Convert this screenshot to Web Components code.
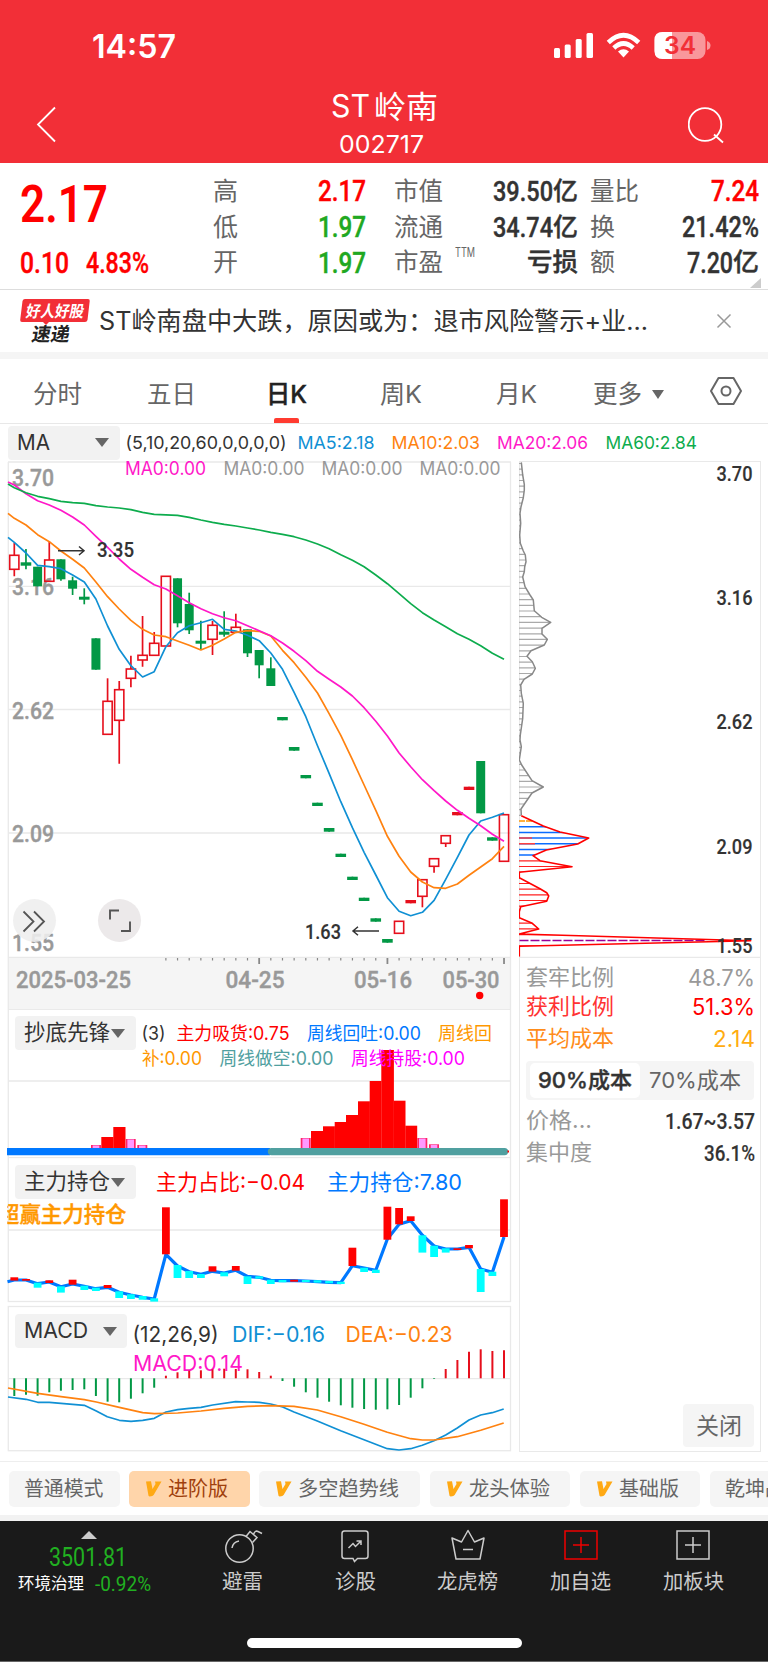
<!DOCTYPE html>
<html lang="zh-CN">
<head>
<meta charset="utf-8">
<title>ST岭南 002717</title>
<style>
    body {
        margin: 0;
        width: 768px;
        background: #fff;
        font-family: Inter, "Noto Sans CJK SC", sans-serif;
        overflow-x: hidden;
    }
</style>
</head>
<body>
<stock-page></stock-page>

<script>
const SANS = 'Inter, &quot;Noto Sans CJK SC&quot;, sans-serif';
const DIN = 'Roboto, &quot;Noto Sans CJK SC&quot;, sans-serif';

// Candle slot centre on the shared time axis
const slot = i => 14.3 + i * 11.66;
const fix = n => Number(n.toFixed(1));

// Svg label with a fixed width; a thin stroke thickens the medium weight
function label(x, y, w, size, text, color, opt = {}) {
    const weight = opt.weight || 400;
    const stroke = Number(weight) === 500 ? `stroke="${color}" stroke-width="${size < 24 && opt.din ? 0.15 : 0.4}"` : '';
    return `<text x="${x}" y="${y}" textLength="${w}" lengthAdjust="spacingAndGlyphs"
        font-family="${opt.din ? DIN : SANS}" font-size="${size}" font-weight="${weight}"
        fill="${color}" ${stroke}>${text}</text>`;
}

function line(points, color, width = 1.7) {
    const d = points.map(p => `${fix(p[0])},${fix(p[1])}`).join(' ');
    return `<polyline points="${d}" fill="none" stroke="${color}" stroke-width="${width}" stroke-linejoin="round"/>`;
}

function hline(x1, x2, y, color = '#e9e9e9', width = 1.3) {
    return `<path d="M${x1} ${y}H${x2}" stroke="${color}" stroke-width="${width}"/>`;
}

class BaseElement extends HTMLElement {
    constructor() {
        super();
        this.attachShadow({ mode: 'open' });
    }

    connectedCallback() {
        this.shadowRoot.innerHTML = this.render();
    }
}

// One line of text set to a given width, centred on its cap height
class FitText extends BaseElement {
    render() {
        const w = Number(this.getAttribute('w'));
        const size = Number(this.getAttribute('size') || 25);
        const weight = this.getAttribute('weight') || 400;
        const din = this.hasAttribute('din');
        return `
            <style>
                :host { display: block; flex: none; }
                svg { display: block; overflow: visible; }
            </style>
            <svg width="${w}" height="${fix(size * 1.2)}">
                ${label(0, fix(size * 0.96), w, size, this.textContent, 'currentColor', { din, weight })}
            </svg>`;
    }
}
customElements.define('fit-text', FitText);

class AppHeader extends BaseElement {
    render() {
        return `
            <style>
                :host { display: block; height: 163px; background: #f22f37; color: #fff; }
                .status { display: flex; height: 86px; box-sizing: border-box; padding: 6px 57px 0 92px; align-items: center; justify-content: space-between; }
                .bar { display: grid; grid-template-columns: 80px 1fr 80px; height: 77px; align-items: center; }
                .title { display: flex; flex-direction: column; align-items: center; gap: 5px; margin-top: -3px; }
                .name { display: flex; gap: 4px; margin-left: 0; }
                .code { margin-left: -6px; }
            </style>
            <div class="status">
                <fit-text w="84" size="32" weight="600">14:57</fit-text>
                <svg width="158" height="30" viewBox="552 31 158 30">
                    <g fill="#fff">
                        <rect x="553" y="48" width="6" height="10" rx="1.5"/>
                        <rect x="563.7" y="44.500" width="6" height="13.500" rx="1.500"/>
                        <rect x="574.700" y="39" width="6" height="19" rx="1.500"/>
                        <rect x="585.500" y="33" width="6.500" height="25" rx="1.500"/>
                        <path d="M622.500 57.500L617 51.500Q622.500 47 628 51.500Z"/>
                    </g>
                    <g fill="none" stroke="#fff" stroke-width="4.600">
                        <path d="M607.300 42.500Q622.500 28 637.700 42.500"/>
                        <path d="M612.800 48Q622.500 39 632.200 48"/>
                    </g>
                    <rect x="653.500" y="32" width="51" height="27" rx="8" fill="#fff" opacity=".5"/>
                    <path d="M671 32H661.500Q653.500 32 653.500 40V51Q653.500 59 661.500 59H671Z" fill="#fff"/>
                    <path d="M706 41Q709.500 42 709.500 45.500T706 50Z" fill="#fff" opacity=".5"/>
                    ${label(663, 54, 32, 24, '34', '#f22f37', { weight: 600 })}
                </svg>
            </div>
            <div class="bar">
                <svg width="80" height="40" viewBox="0 0 80 40"><path d="M55 2.500L38 19.500L55 36.500" fill="none" stroke="#fff" stroke-width="1.800"/></svg>
                <div class="title">
                    <div class="name"><fit-text w="39" size="30.500">ST</fit-text><fit-text w="64" size="31">岭南</fit-text></div>
                    <fit-text class="code" w="85" size="24">002717</fit-text>
                </div>
                <svg width="50" height="44" viewBox="688 102.500 50 44" fill="none" stroke="#fff" stroke-width="1.800">
                    <circle cx="705" cy="124" r="16.300"/><path d="M714 134L723 142"/>
                </svg>
            </div>`;
    }
}
customElements.define('app-header', AppHeader);

// A label on the left, a value on the right
class StatItem extends BaseElement {
    render() {
        return `
            <style>
                :host { display: flex; height: 35.700px; align-items: center; justify-content: space-between; color: #666; }
                .value { display: flex; align-items: center; color: ${this.getAttribute('color') || '#333'}; }
            </style>
            <slot></slot>
            <div class="value"><slot name="value"></slot></div>`;
    }
}
customElements.define('stat-item', StatItem);

class QuotePanel extends BaseElement {
    render() {
        return `
            <style>
                :host { display: grid; grid-template-columns: 193px 153px 184px 169px; column-gap: 0; padding: 10px 0 0 20px;
                    height: 127px; box-sizing: border-box; border-bottom: 1px solid #ddd; position: relative; }
                .price { color: #f00; }
                .change { display: flex; gap: 17px; margin-top: 10.500px; }
                .big { margin-top: -1px; }
                .mid { margin-left: 28px; width: 184px; }
                .last { margin-left: 40px; width: 169px; }
                .ttm { display: flex; gap: 12px; align-items: center; }
                .ttm fit-text + fit-text { margin-top: -19px; }
                .corner { position: absolute; right: 7px; bottom: 1px; width: 0; height: 0; border-left: 11px solid transparent; border-bottom: 10px solid #ccc; }
            </style>
            <div class="price">
                <fit-text class="big" din w="88" size="52" weight="600">2.17</fit-text>
                <div class="change">
                    <fit-text din w="49" size="29" weight="500">0.10</fit-text>
                    <fit-text din w="63" size="29" weight="500">4.83%</fit-text>
                </div>
            </div>
            <div>
                <stat-item color="#f00"><fit-text w="25">高</fit-text><fit-text slot="value" din w="48" size="29" weight="500">2.17</fit-text></stat-item>
                <stat-item color="#21a821"><fit-text w="25">低</fit-text><fit-text slot="value" din w="48" size="29" weight="500">1.97</fit-text></stat-item>
                <stat-item color="#21a821"><fit-text w="25">开</fit-text><fit-text slot="value" din w="48" size="29" weight="500">1.97</fit-text></stat-item>
            </div>
            <div class="mid">
                <stat-item><fit-text w="49">市值</fit-text><fit-text slot="value" din w="60" size="28" weight="500">39.50</fit-text><fit-text slot="value" w="25" weight="500">亿</fit-text></stat-item>
                <stat-item><fit-text w="49">流通</fit-text><fit-text slot="value" din w="60" size="28" weight="500">34.74</fit-text><fit-text slot="value" w="25" weight="500">亿</fit-text></stat-item>
                <stat-item><div class="ttm"><fit-text w="49">市盈</fit-text><fit-text w="20" size="12.500">TTM</fit-text></div><fit-text slot="value" w="51" weight="500">亏损</fit-text></stat-item>
            </div>
            <div class="last">
                <stat-item color="#f00"><fit-text w="49">量比</fit-text><fit-text slot="value" din w="48" size="29" weight="500">7.24</fit-text></stat-item>
                <stat-item><fit-text w="25">换</fit-text><fit-text slot="value" din w="77" size="29" weight="500">21.42%</fit-text></stat-item>
                <stat-item><fit-text w="25">额</fit-text><fit-text slot="value" din w="46" size="29" weight="500">7.20</fit-text><fit-text slot="value" w="26" weight="500">亿</fit-text></stat-item>
            </div>
            <div class="corner"></div>`;
    }
}
customElements.define('quote-panel', QuotePanel);

class NewsBar extends BaseElement {
    render() {
        return `
            <style>
                :host { display: flex; align-items: center; height: 62px; padding-left: 20px; border-bottom: 7px solid #f5f5f5; color: #333; }
                .text { margin: 0 69px 0 8.500px; }
                svg { overflow: visible; flex: none; }
            </style>
            <svg width="70" height="46" viewBox="20 298 70 46">
                <path d="M25 299H88Q90 299 89.700 301L87.500 320Q87 322 85 322H49L46 325L43 322H22Q20 322 20.200 320L22.500 301Q23 299 25 299Z" fill="#f22f37"/>
                <g transform="skewX(-10)">
                    ${label(81, 316.8, 58, 16, '好人好股', '#fff', { weight: 700 })}
                    ${label(91, 341, 38, 19, '速递', '#222', { weight: 700 })}
                </g>
            </svg>
            <fit-text class="text" w="549" size="25.3">ST岭南盘中大跌，原因或为：退市风险警示+业...</fit-text>
            <svg width="14" height="14" viewBox="0 0 14 14"><path d="M.5.5L13.5 13.5M13.5.5L.5 13.5" stroke="#999" stroke-width="1.500"/></svg>`;
    }
}
customElements.define('news-bar', NewsBar);

class PeriodTabs extends BaseElement {
    render() {
        return `
            <style>
                :host { display: grid; grid-template-columns: 115px 113px 117px 111px 121px 107px 84px; height: 64px; border-bottom: 1px solid #e8e8e8; color: #666; }
                div { display: flex; flex-direction: column; align-items: center; justify-content: center; position: relative; padding-top: 6px; }
                .on { color: #222; }
                .on::after { content: ""; position: absolute; bottom: 0; width: 25px; height: 5px; border-radius: 2px 2px 0 0; background: #ff3b30; }
                .more { flex-direction: row; gap: 10px; padding-right: 5px; }
                .set { padding: 0; }
            </style>
            <div><fit-text w="49" size="24.5">分时</fit-text></div>
            <div><fit-text w="49" size="24.5">五日</fit-text></div>
            <div class="on"><fit-text w="41" size="24.5" weight="500">日K</fit-text></div>
            <div><fit-text w="42" size="24.5">周K</fit-text></div>
            <div><fit-text w="41" size="24.5">月K</fit-text></div>
            <div class="more"><fit-text w="49" size="24.5">更多</fit-text>
                <svg width="12" height="9"><path d="M0 0H12L6 9Z" fill="#666"/></svg></div>
            <div class="set"><svg width="34" height="30" viewBox="0 0 34 30" fill="none" stroke="#666" stroke-width="2">
                <path d="M9.500 2H24.500L32 15L24.500 28H9.500L2 15Z" stroke-linejoin="round"/><circle cx="17" cy="15" r="4.500"/></svg></div>`;
    }
}
customElements.define('period-tabs', PeriodTabs);

// Grey drop-down that picks an indicator
class PickerButton extends BaseElement {
    render() {
        return `
            <style>
                :host { display: flex; align-items: center; justify-content: space-between; box-sizing: border-box; height: 34px;
                    padding: 0 11px 0 9px; background: #f2f2f2; border-radius: 4px; color: #333; }
            </style>
            <slot></slot>
            <svg width="14" height="9"><path d="M0 0H14L7 9Z" fill="#666"/></svg>`;
    }
}
customElements.define('picker-button', PickerButton);

class MaLegend extends BaseElement {
    render() {
        return `
            <style>
                :host { display: flex; height: 37px; align-items: center; padding-left: 8px; }
                picker-button { width: 112px; margin-right: 6px; }
            </style>
            <picker-button><fit-text w="33" size="22">MA</fit-text></picker-button>
            <svg width="600" height="37" viewBox="126 424 600 37">
                ${label(125.5, 449.3, 161, 17.6, '(5,10,20,60,0,0,0,0)', '#333')}
                ${label(297.5, 449.3, 77, 17.6, 'MA5:2.18', '#1090d4')}
                ${label(391.5, 449.3, 88.5, 17.6, 'MA10:2.03', '#ff8210')}
                ${label(497, 449.3, 91, 17.6, 'MA20:2.06', '#ff18c8')}
                ${label(605.5, 449.3, 91.5, 17.6, 'MA60:2.84', '#0dac4d')}
            </svg>`;
    }
}
customElements.define('ma-legend', MaLegend);

const RED = '#e60f1c';
const GREEN = '#029845';

// Daily candles: kind, body top, body bottom, wick top, wick bottom (d = flat day drawn as a dash)
const CANDLES = [
    ['r', 555.3, 569.3, 542.7, 576.3], ['g', 562.3, 565.7, 549, 569.3], ['g', 566.7, 586.3], ['r', 560, 581.3, 541.7],
    ['g', 559.3, 579.3, 559.3, 580.7], ['g', 580.3, 588.7, 576.7, 595], ['g', 596.7, 599.7, 588.3, 604.3], ['g', 638.3, 669.7],
    ['r', 701.3, 734.3, 678.3], ['r', 689.7, 720.3, 681, 763.7], ['r', 669, 678.3, 655.7, 687.3], ['r', 655.3, 660, 616, 666.7],
    ['r', 643.3, 655.3, 632], ['r', 576.3, 646], ['g', 578.3, 623.3, 578.3, 627.3], ['g', 604, 630.3, 592.7, 634],
    ['g', 640.7, 643.7, 620.7, 649.3], ['r', 625.3, 639.3, 621, 655], ['g', 631.7, 634.7, 611.3, 636.7], ['r', 627.3, 632.3, 613.7],
    ['g', 629.3, 653.3, 629.3, 657], ['g', 650, 665.3, 650, 678.3], ['g', 668.3, 686, 657.3],
    ['g', 717, 720.3], ['g', 747, 750.7], ['g', 775, 778.3], ['g', 802.7, 806], ['g', 828, 831.7], ['g', 853.7, 857],
    ['g', 876.7, 880], ['g', 897.7, 901], ['g', 918.3, 921.7], ['g', 939, 942.7],
    ['r', 921.3, 933.3], ['d', 900, 903.3], ['r', 879.7, 896.3, 879.7, 907.3], ['r', 858.7, 866.3, 858.7, 872.7],
    ['r', 835.7, 843.3, 835.7, 847], ['d', 812, 815.3], ['d', 786.7, 790], ['g', 761, 813.3], ['g', 837.3, 840.7], ['r', 814.7, 861.3]
];

// Moving averages; the first value sits on the left edge of the plot
const MA5 = [537.3, 542.3, 553, 565.3, 566.7, 568.7, 575, 582, 599, 626, 649.3, 665.7, 677, 671.7, 646.7, 632.7, 625.7, 622.7, 619.3, 629.3, 631, 635.3, 640.7, 653, 669.3, 692.3, 716.7, 745.7, 773.3, 801.7, 827.7, 852.3, 875, 897.7, 911.3, 915.7, 912.3, 900.3, 879.3, 857.3, 835, 821, 817.3, 813];
const MA10 = [513.3, 518.3, 525, 534.7, 541.7, 551, 559.3, 568, 582, 596.7, 609, 620.3, 629.3, 635, 636.7, 641, 645.3, 650, 645.3, 639, 632.3, 630.7, 631.3, 636, 650.3, 662.7, 677.3, 693, 713.7, 735.3, 759.7, 785, 810.3, 836.3, 856.3, 872, 882, 887.7, 888.3, 884, 875.3, 867, 858.7, 846.3];
const MA20 = [482, 485, 493.7, 500.7, 505, 510.3, 517, 525, 536.3, 547.3, 559, 569.3, 577.3, 584.7, 589, 595.7, 602.7, 608.7, 613.7, 617.7, 620.7, 625.7, 630.7, 635.7, 643, 651.3, 660.7, 671.3, 679.3, 687, 696, 707.7, 721.3, 736, 753, 766.7, 779.7, 790.7, 801, 810.3, 818.3, 825.7, 834.3, 841.3];
const MA60 = [484, 487.7, 492.7, 496.3, 498.7, 501.3, 502.7, 503.3, 505.7, 507, 508, 509.7, 512.3, 514.3, 514.8, 515.3, 517.3, 520, 522.3, 524.3, 526, 528, 530, 532.3, 534.3, 536.7, 540, 544, 548.7, 554.7, 560.3, 566.7, 575, 583.7, 593.7, 603.7, 612.7, 620, 626.7, 633.7, 639.3, 645.7, 653.3, 659.3];
const onAxis = ys => ys.map((y, i) => [i ? slot(i - 1) : 8, y]);

class KlineChart extends BaseElement {
    candle([kind, top, bottom, high = top, low = bottom], i) {
        const x = slot(i);
        const color = kind === 'g' ? GREEN : RED;
        if (kind === 'r') {
            return `<path d="M${x} ${high}V${top}M${x} ${bottom}V${low}" stroke="${color}" stroke-width="1.7"/>
                <rect x="${x - 4.6}" y="${top}" width="9.2" height="${bottom - top}" fill="none" stroke="${color}" stroke-width="1.6"/>`;
        }
        const half = bottom - top < 4 ? 5.3 : 4.5;
        return `<path d="M${x} ${high}V${low}" stroke="${color}" stroke-width="1.7"/>
            <rect x="${x - half}" y="${top}" width="${half * 2}" height="${bottom - top}" fill="${color}"/>`;
    }

    ticks() {
        let d = '';
        for (let i = 13; i <= 42; i++) {
            const big = i === 21 || i === 32 || i === 42;
            d += `<path d="M${slot(i)} 958V${big ? 964 : 960.5}" stroke="#888" stroke-width="${big ? 1.8 : 1.2}"/>`;
        }
        return d;
    }

    render() {
        const axis = [['3.70', 486], ['3.16', 595], ['2.62', 718.7], ['2.09', 842], ['1.55', 951]];
        const dates = [['2025-03-25', 16, 115], ['04-25', 225.5, 59], ['05-16', 354, 58], ['05-30', 442.5, 57]];
        const zero = [[125, '#ff18c8'], [223.5, '#999'], [321.5, '#999'], [419.5, '#999']];
        return `
            <style>
                :host { display: block; height: 548px; }
                svg { display: block; overflow: visible; }
            </style>
            <svg width="515" height="548" viewBox="0 461 515 548">
                <rect x="8" y="957" width="503" height="52" fill="#f5f5f5"/>
                ${[462, 586.3, 709.5, 833, 957.3].map(y => hline(8, 511, y)).join('')}
                <path d="M8.300 462V1009M510.500 462V1009" stroke="#e9e9e9" stroke-width="1.300"/>
                ${axis.map(a => label(12, a[1], 42, 24, a[0], '#999', { din: true, weight: 500 })).join('')}
                ${zero.map(z => label(z[0], 474.5, 81, 18, 'MA0:0.00', z[1])).join('')}
                ${CANDLES.map(this.candle).join('')}
                ${line(onAxis(MA5), '#1090d4')}
                ${line(onAxis(MA10), '#ff8210')}
                ${line(onAxis(MA20), '#ff18c8')}
                ${line(onAxis(MA60), '#0dac4d')}
                <path d="M58 550.700H84M79 546.500L84 550.700L79 555M379 931H353M358 926.800L353 931L358 935.200" fill="none" stroke="#333" stroke-width="1.500"/>
                ${label(97, 557, 37, 20, '3.35', '#333', { din: true, weight: 500 })}
                ${label(305, 939.3, 36, 20, '1.63', '#333', { din: true, weight: 500 })}
                <circle cx="34.500" cy="920.500" r="21.500" fill="#eee" opacity=".88"/>
                <circle cx="119.500" cy="920.500" r="21.500" fill="#ece9ea"/>
                <path d="M23.500 911.500L33.500 921.500L23.500 931.500M34 911.500L44 921.500L34 931.500" fill="none" stroke="#555" stroke-width="1.800"/>
                <path d="M110 919.500V910.500H119M121 931H130V921.500" fill="none" stroke="#555" stroke-width="1.900"/>
                ${this.ticks()}
                ${dates.map(d => label(d[1], 988, d[2], 24, d[0], '#999', { din: true, weight: 500 })).join('')}
                <circle cx="479.700" cy="995.500" r="3.700" fill="#f00"/>
            </svg>`;
    }
}
customElements.define('kline-chart', KlineChart);

// Frame shared by the three indicators: plot in the back, picker on top of it
class IndicatorChart extends BaseElement {
    frame(top, height, boxTop, boxBottom, plot, picker, pickerTop, pickerWidth, pickerGap) {
        return `
            <style>
                :host { display: grid; height: ${height}px; align-items: start; justify-items: start; }
                svg, picker-button { grid-area: 1 / 1; }
                svg { display: block; }
                picker-button { width: ${pickerWidth}px; margin: ${pickerTop - top}px 0 0 15px; padding-right: ${pickerGap}px; }
            </style>
            <svg width="515" height="${height}" viewBox="0 ${top} 515 ${height}">
                <rect x="8.300" y="${boxTop}" width="502.200" height="${boxBottom - boxTop}" fill="none" stroke="#e9e9e9" stroke-width="1.300"/>
                ${plot}
            </svg>
            <picker-button>${picker}</picker-button>`;
    }
}

class BottomFisher extends IndicatorChart {
    render() {
        const red = [[101.3, 113.3, 1137], [113.3, 125.3, 1127], [311, 323, 1131], [323, 334.7, 1126.3], [334.7, 346, 1122], [346, 358, 1115],
            [358, 369.7, 1101.3], [369.7, 381.3, 1081], [381.3, 393.7, 1050], [393.7, 405.3, 1100.7], [405.3, 417, 1125.7]];
        const pink = [[91, 1145], [125.7, 1139], [137.3, 1145], [149, 1148], [300.7, 1138], [417.3, 1138], [429, 1144.3], [440.7, 1148]];
        const plot = `
            ${hline(8, 511, 1081)}
            ${red.map(b => `<rect x="${b[0]}" y="${b[2]}" width="${b[1] - b[0] + 0.2}" height="${1149 - b[2]}" fill="#f00"/>`).join('')}
            ${pink.map(b => `<rect x="${b[0]}" y="${b[1]}" width="10" height="${1149 - b[1]}" fill="#ff2468"/>
                <rect x="${b[0] + 1.7}" y="${b[1] + 0.5}" width="6.6" height="${fix(1149 - b[1])}" fill="#ff99ff"/>`).join('')}
            <path d="M7 1151.600H270" stroke="#0078ff" stroke-width="7.400"/>
            <path d="M271.500 1151.600H504.500" stroke="#50a0a0" stroke-width="7.400" stroke-linecap="round"/>
            <rect x="507.500" y="1150.500" width="1.500" height="2" fill="#f00"/>
            ${label(141.5, 1040, 24, 18.5, '(3)', '#333')}
            ${label(176.5, 1040, 113, 18.5, '主力吸货:0.75', '#f00')}
            ${label(307, 1040, 114, 18.5, '周线回吐:0.00', '#0078ff')}
            ${label(438, 1040, 54, 18.5, '周线回', '#ff9800')}
            ${label(142, 1065, 60, 18.5, '补:0.00', '#ff9800')}
            ${label(219.5, 1065, 114, 18.5, '周线做空:0.00', '#50a0a0')}
            ${label(351, 1065, 114, 18.5, '周线持股:0.00', '#f0f')}`;
        return this.frame(1009, 148, 1009.3, 1162, plot, '<fit-text w="86" size="21.300">抄底先锋</fit-text>', 1016, 121, 11);
    }
}
customElements.define('bottom-fisher', BottomFisher);

class MainHolding extends IndicatorChart {
    render() {
        // line height, bar top, bar bottom, r = inflow
        const rows = [[375, 367, 377, 'r'], [375, 372, 377, 'r'], [386, 383, 398], [381, 376, 384, 'r'], [395, 394, 413], [387, 374, 389, 'r'],
            [394, 392, 405], [401, 398, 408], [397, 390, 399, 'r'], [412, 409, 429], [420, 418, 432], [427, 423, 434], [432, 430, 440],
            [298, 157, 298, 'r'], [333, 330, 369], [350, 348, 369], [358, 357, 369], [349, 334, 350, 'r'], [354, 352, 364], [346, 333, 347, 'r'],
            [364, 364, 387], [367, 364, 371], [376, 374, 387], [377, 375, 382], [377, 374, 380, 'r'], [378, 375, 381], [380, 376, 383],
            [382, 378, 385], [383, 380, 387], [332, 278, 333, 'r'], [339, 338, 351], [346, 344, 354], [252, 155, 254, 'r'], [208, 159, 208, 'r'],
            [197, 184, 198, 'r'], [241, 241, 293], [273, 272, 306], [282, 280, 293], [282, 280, 285, 'r'], [277, 270, 280, 'r'],
            [342, 342, 411], [352, 350, 363], [246, 133, 246, 'r']];
        const y = v => fix(1155 + v / 3);
        const points = [[7.5, y(380)], ...rows.map((r, i) => [slot(i), y(r[0])])];
        const plot = `
            ${hline(8, 511, 1230)}
            ${line(points, '#0078ff', 3.2)}
            ${rows.map((r, i) => `<rect x="${fix(slot(i) - 3.9)}" y="${y(r[1])}" width="7.8" height="${fix((r[2] - r[1]) / 3)}" fill="${r[3] ? '#f00' : '#0ff'}"/>`).join('')}
            <clipPath id="c"><rect x="7.300" y="1157" width="504" height="147"/></clipPath>
            <g clip-path="url(#c)">${label(-2, 1221.5, 128.5, 21.4, '超赢主力持仓', '#ff9800', { weight: 500 })}</g>
            ${label(156, 1189.5, 149, 21.4, '主力占比:−0.04', '#f00')}
            ${label(327, 1189.5, 135, 21.4, '主力持仓:7.80', '#0078ff')}`;
        return this.frame(1157, 147, 1157.5, 1301.5, plot, '<fit-text w="86" size="21.300">主力持仓</fit-text>', 1165, 121, 11);
    }
}
customElements.define('main-holding', MainHolding);

class MacdChart extends IndicatorChart {
    render() {
        const bars = [288, 284, 287, 277, 272, 270, 268, 288, 305, 307, 296, 280, 263, 227, 217, 212, 211, 208, 206, 207, 208, 216, 227,
            243, 260, 277, 293, 305, 316, 323, 327, 329, 328, 315, 293, 265, 237, 207, 180, 155, 148, 153, 151];
        const dif = [[24, 291], [78, 298], [113, 307], [148, 307], [183, 310], [253, 316], [289, 333], [322, 350], [358, 361], [393, 364],
            [428, 361], [463, 355], [498, 336], [533, 329], [568, 325], [603, 322], [638, 315], [707, 305], [743, 306], [778, 307], [812, 312],
            [848, 321], [882, 336], [952, 363], [1022, 392], [1092, 419], [1162, 446], [1197, 450], [1232, 446], [1267, 436], [1302, 422],
            [1337, 405], [1372, 384], [1407, 360], [1442, 345], [1477, 338], [1511, 327]];
        const dea = [[24, 264], [113, 280], [183, 290], [253, 299], [289, 306], [358, 322], [428, 338], [463, 341], [533, 339], [603, 333],
            [673, 325], [743, 319], [812, 317], [882, 319], [952, 330], [1022, 350], [1092, 373], [1162, 397], [1232, 416], [1267, 420],
            [1302, 420], [1372, 410], [1442, 391], [1511, 369]];
        const scale = points => points.map(p => [p[0] / 3, 1300 + p[1] / 3]);
        const plot = `
            ${hline(8, 511, 1378.7)}
            ${label(133, 1371.3, 110, 21.3, 'MACD:0.14', '#ff18c8')}
            ${bars.map((v, i) => `<path d="M${fix(slot(i))} 1378.300V${fix(1300 + v / 3)}" stroke="${v > 234 ? GREEN : RED}" stroke-width="2"/>`).join('')}
            ${line(scale(dif), '#1090d4')}
            ${line(scale(dea), '#ff8210')}
            ${label(132.5, 1341.7, 86, 21.3, '(12,26,9)', '#333')}
            ${label(232, 1341.7, 93, 21.3, 'DIF:−0.16', '#1090d4')}
            ${label(345.5, 1341.7, 107, 21.3, 'DEA:−0.23', '#ff8210')}`;
        return this.frame(1304, 148, 1306.5, 1450.7, plot, '<fit-text w="64" size="21.300">MACD</fit-text>', 1314, 112, 10);
    }
}
customElements.define('macd-chart', MacdChart);

// Chip distribution by price, with cost figures below
class CostPanel extends BaseElement {
    distribution() {
        const a = [[34, 22], [38, 60], [43, 88], [43, 105], [40, 128], [33, 155], [30, 175], [32, 205], [29, 240], [31, 265], [40, 288], [46, 300],
            [48, 320], [44, 335], [43, 350], [38, 366], [45, 395], [60, 420], [70, 435], [73, 467], [95, 487], [122, 502], [96, 520], [96, 537],
            [112, 553], [103, 570], [63, 587], [51, 604], [67, 620], [76, 640], [67, 657], [42, 673], [32, 690], [34, 715], [40, 745], [38, 790], [31, 840]];
        const b = [[30, 0], [34, 20], [28, 60], [35, 75], [66, 122], [100, 141], [66, 159], [33, 207], [34, 225]];
        const c = [[34, 227], [100, 258], [150, 276], [236, 294], [203, 312], [109, 330], [69, 347], [90, 362], [186, 380], [28, 397], [28, 413],
            [90, 446], [110, 458], [116, 468], [110, 484], [32, 500], [28, 515], [28, 533], [67, 550], [86, 567], [28, 582], [722, 602], [28, 619], [28, 650]];
        const at = (points, y0) => points.map(p => [510 + p[0] / 3, y0 + p[1] / 3]);
        const grey = [...at(a, 455), ...at(b, 740)];
        const red = at(c, 740);
        const outline = [[519, 462], ...grey, ...red, [519, 956]].map(p => `${fix(p[0])},${fix(p[1])}`).join(' ');

        let rows = '';
        for (let n = -28; n <= 57; n++) {
            const y = fix(622.4 + n * 5.676);
            if (n < 35) rows += hline(519, 700, y, '#aaa', 1.2);
            else if (n === 35) rows += `<path d="M519 ${y}H700" stroke="#ff9800" stroke-width="1.500" stroke-dasharray="6 1"/>`;
            else if (n < 42) rows += hline(519, 700, y, '#0a6cff', 1.5);
            else if (n !== 56) rows += hline(519, 760, y, '#ff2020', 1.2);
            if (n === 38) rows += hline(519, 532, y, '#ff4040', 1.5);
            if (n === 39) rows += hline(519, 535, y, '#ff4040', 1.5);
        }
        return `
            <clipPath id="chips"><polygon points="${outline}"/></clipPath>
            <g clip-path="url(#chips)">${rows}</g>
            <path d="M519.500 940.600H706" stroke="#909" stroke-width="1.500" stroke-dasharray="9 2"/>
            ${line(grey, '#888', 1.5)}
            ${line(red, '#f00', 1.6)}`;
    }

    render() {
        const axis = [['3.70', 481], ['3.16', 605], ['2.62', 729.3], ['2.09', 854], ['1.55', 953.3]];
        return `
            <style>
                :host { display: block; box-sizing: border-box; width: 242px; height: 991px; border: 1.500px solid #e9e9e9; margin-left: 4px; }
                .plot { display: block; margin: -1px 0 0 -1px; }
                .row { display: flex; justify-content: space-between; align-items: center; padding: 0 5px 0 6px; height: 32px; color: #999; }
                .first { margin-top: 3px; }
                .win { color: #f33; height: 26px; }
                .red { color: #f00; }
                .avg { color: #ff8c1a; height: 38px; }
                .gold { color: #ffac10; }
                .seg { display: flex; height: 35px; padding: 2px 4px; margin: 4px 6px 4px; background: #f5f5f5; border-radius: 4px; }
                .seg div { display: flex; align-items: center; justify-content: center; flex: 1; color: #666; border-radius: 5px; }
                .seg .on { background: #fff; color: #333; flex: 0 0 110px; }
                .dark { color: #333; }
                .close { display: flex; align-items: center; justify-content: center; width: 71px; height: 43px; background: #f5f5f5; border-radius: 4px; color: #666;
                    margin: 236px 6px 0 auto; }
            </style>
            <svg class="plot" width="242" height="497" viewBox="519 461 242 497">
                ${this.distribution()}
                ${axis.map(a => label(716.5, a[1], 36, 20, a[0], '#333', { din: true, weight: 500 })).join('')}
                ${hline(519, 761, 957.3)}
            </svg>
            <div class="row first"><fit-text w="88" size="22">套牢比例</fit-text><fit-text w="67" size="22.500">48.7%</fit-text></div>
            <div class="row win"><fit-text w="88" size="22">获利比例</fit-text><fit-text class="red" w="63" size="22.500">51.3%</fit-text></div>
            <div class="row avg"><fit-text w="88" size="22">平均成本</fit-text><fit-text class="gold" w="42" size="22.500">2.14</fit-text></div>
            <div class="seg">
                <div class="on"><fit-text w="94" size="22" weight="500">90%成本</fit-text></div>
                <div><fit-text w="92" size="22">70%成本</fit-text></div>
            </div>
            <div class="row"><fit-text w="66" size="22">价格...</fit-text><fit-text class="dark" din w="90" size="22.500" weight="500">1.67~3.57</fit-text></div>
            <div class="row"><fit-text w="66" size="22">集中度</fit-text><fit-text class="dark" din w="51" size="22.500" weight="500">36.1%</fit-text></div>
            <div class="close"><fit-text w="46" size="23">关闭</fit-text></div>`;
    }
}
customElements.define('cost-panel', CostPanel);

class ModeChip extends BaseElement {
    render() {
        const vip = this.hasAttribute('vip');
        return `
            <style>
                :host { display: flex; flex: none; box-sizing: border-box; width: ${this.getAttribute('width')}px; height: 36px; align-items: center;
                    padding-left: 15px; gap: 6px; border-radius: 5px; background: #f5f5f5; color: #666; }
                :host([active]) { background: #ffd5aa; color: #a0400c; }
                svg { margin-left: 1px; }
            </style>
            ${vip ? '<svg width="17" height="16" viewBox="0 0 17 16"><path d="M1 .5L6 0.300L7.500 8L10.500 3L10 .5H16.500L9.500 12.500Q8.500 15.500 4.500 15.500L3.500 14.800Z" fill="#ffa914"/></svg>' : ''}
            <slot></slot>`;
    }
}
customElements.define('mode-chip', ModeChip);

class ModeChips extends BaseElement {
    render() {
        return `
            <style>
                :host { display: flex; gap: 9.500px; height: 53px; padding: 0 0 0 9px; margin-top: 9px; align-items: center; overflow: hidden;
                    border-top: 1px solid #eee; border-bottom: 6px solid #f2f2f2; }
            </style>
            <mode-chip width="110.500"><fit-text w="79.500" size="19.900">普通模式</fit-text></mode-chip>
            <mode-chip width="120.500" vip active><fit-text w="60" size="19.900">进阶版</fit-text></mode-chip>
            <mode-chip width="161" vip><fit-text w="101" size="19.900">多空趋势线</fit-text></mode-chip>
            <mode-chip width="140.500" vip><fit-text w="81" size="19.900">龙头体验</fit-text></mode-chip>
            <mode-chip width="120.500" vip><fit-text w="60" size="19.900">基础版</fit-text></mode-chip>
            <mode-chip width="160"><fit-text w="80" size="19.900">乾坤战法</fit-text></mode-chip>`;
    }
}
customElements.define('mode-chips', ModeChips);

class BottomNav extends BaseElement {
    render() {
        const svg = body => `<svg width="38" height="36" viewBox="0 0 38 36" fill="none" stroke="currentColor" stroke-width="1.5">${body}</svg>`;
        const plus = svg('<path d="M3 4H35V32H3ZM11 18H27M19 10V26"/>');
        const items = [
            ['避雷', 41, svg('<circle cx="15.5" cy="21.500" r="13.700"/><path d="M8 21Q9 15 15 14M22 9.500L26 4.500L33 10.500L28.500 15.500M29.500 7.500Q31 3 34 4.500T38 6.500"/>')],
            ['诊股', 41, svg('<path d="M7.500 4H29.500Q32 4 32 6.500V29Q32 31.500 29.500 31.500H21.500L18.500 34.500L17 31.500H8.500Q6 31.500 6 29V6.500Q6 4 8.500 4M12.500 21L17 16.500L19.500 19.500L25 14M20.500 14H25V18"/>')],
            ['龙虎榜', 61, svg('<path d="M3 11L12.500 15L19 3.500L25.500 15L35 11L31 32H7ZM14 22.500H24" stroke-linejoin="round"/>')],
            ['加自选', 61, plus, 'hot'],
            ['加板块', 61, plus]
        ];
        return `
            <style>
                :host { display: block; height: 141px; box-sizing: border-box; background: #1a1a1a; border-bottom: 1px solid #666; color: #ccc; }
                .row { display: flex; height: 117px; }
                .index { width: 172px; margin-right: 14.500px; display: flex; flex-direction: column; align-items: center; }
                .up { margin: 10px 0 0 5px; }
                .point { color: #21b021; margin: 2.500px 0 0 3px; }
                .sector { display: flex; align-items: center; gap: 11px; color: #fff; margin: -1px 0 0 -4px; }
                .sector .down { color: #21b021; }
                .item { width: 112.600px; display: flex; flex-direction: column; align-items: center; padding-top: 6px; box-sizing: border-box; gap: 6px; }
                .item svg { overflow: visible; display: block; }
                .hot svg { color: #f00000; }
                .home { width: 275px; height: 10px; border-radius: 5px; background: #fff; margin: 0 auto; }
            </style>
            <div class="row">
                <div class="index">
                    <svg class="up" width="16" height="8"><path d="M0 8H16L8 0Z" fill="#ccc"/></svg>
                    <fit-text class="point" din w="78" size="25">3501.81</fit-text>
                    <div class="sector"><fit-text w="66" size="16.300">环境治理</fit-text><fit-text class="down" din w="56" size="21">-0.92%</fit-text></div>
                </div>
                ${items.map(i => `<div class="item">${i[3] ? `<span class="${i[3]}">${i[2]}</span>` : `<span>${i[2]}</span>`}<fit-text w="${i[1]}" size="20.3">${i[0]}</fit-text></div>`).join('')}
            </div>
            <div class="home"></div>`;
    }
}
customElements.define('bottom-nav', BottomNav);

class StockPage extends BaseElement {
    render() {
        return `
            <style>
                :host { display: block; width: 768px; height: 1662px; overflow: hidden; }
                .charts { display: flex; height: 991px; }
                .left { width: 515px; }
            </style>
            <app-header></app-header>
            <quote-panel></quote-panel>
            <news-bar></news-bar>
            <period-tabs></period-tabs>
            <ma-legend></ma-legend>
            <div class="charts">
                <div class="left">
                    <kline-chart></kline-chart>
                    <bottom-fisher></bottom-fisher>
                    <main-holding></main-holding>
                    <macd-chart></macd-chart>
                </div>
                <cost-panel></cost-panel>
            </div>
            <mode-chips></mode-chips>
            <bottom-nav></bottom-nav>`;
    }
}
customElements.define('stock-page', StockPage);
</script>
</body>
</html>
